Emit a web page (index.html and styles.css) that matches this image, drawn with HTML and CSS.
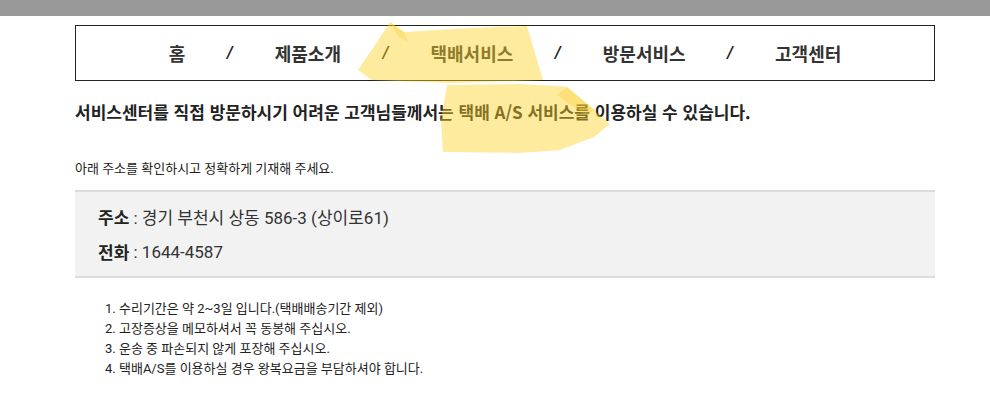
FILE: index.html
```html
<!DOCTYPE html>
<html lang="ko">
<head>
  <meta charset="UTF-8">
  <meta name="viewport" content="width=device-width, initial-scale=1.0">
  <title>택배서비스 - 고객센터</title>
  <link rel="stylesheet" href="styles.css">
</head>
<body>

  <div class="topbar"></div>

  <div class="page">
    <nav class="menu">
      <a href="#">홈</a>
      <span class="sep">/</span>
      <a href="#">제품소개</a>
      <span class="sep">/</span>
      <a href="#">택배서비스</a>
      <span class="sep">/</span>
      <a href="#">방문서비스</a>
      <span class="sep">/</span>
      <a href="#">고객센터</a>
    </nav>

    <h2 class="lead">서비스센터를 직접 방문하시기 어려운 고객님들께서는 택배 A/S 서비스를 이용하실 수 있습니다.</h2>

    <p class="note">아래 주소를 확인하시고 정확하게 기재해 주세요.</p>

    <div class="addrBox">
      <p><strong>주소</strong> : 경기 부천시 상동 586-3 (상이로61)</p>
      <p><strong>전화</strong> : 1644-4587</p>
    </div>

    <ol class="rules">
      <li>수리기간은 약 2~3일 입니다.(택배배송기간 제외)</li>
      <li>고장증상을 메모하셔서 꼭 동봉해 주십시오.</li>
      <li>운송 중 파손되지 않게 포장해 주십시오.</li>
      <li>택배A/S를 이용하실 경우 왕복요금을 부담하셔야 합니다.</li>
    </ol>
  </div>

  <!-- marker highlights drawn over the page -->
  <svg class="marks" width="990" height="417" viewBox="0 0 990 417">
    <polygon points="390,22 404,32 470,28 527,26 543,80 450,83 372,80 358,70 375,45"/>
    <polygon points="390,22 404,32 408,42 398,36" class="fold"/>
    <polygon points="447,85 520,84 557,86 567,87 610,124 594,137 560,150 520,153 443,152 441,120"/>
    <polygon points="557,95 567,87 595,110 585,115" class="fold"/>
  </svg>

</body>
</html>
```

FILE: styles.css
```css
body {
  margin: 0;
  font-family: Roboto, "Noto Sans CJK KR", sans-serif;
  color: #222;
  background: #fff;
}
.topbar {
  height: 16px;
  background-color: #999;
}
.page {
  width: 860px;
  margin-left: 75px;
  padding-top: 9px;
}
.menu {
  display: flex;
  justify-content: center;
  align-items: center;
  gap: 42px;
  height: 54px;
  border: 1px solid #222;
  font-family: "Noto Sans CJK KR", sans-serif;
  font-size: 18px;
  font-weight: 700;
}
.menu a {
  color: #333;
  text-decoration: none;
}
.menu .sep {
  font-family: "DejaVu Sans", sans-serif;
  font-style: italic;
  font-size: 15px;
  color: #222;
}
.lead {
  margin: 19px 0 0;
  font-family: "Noto Sans CJK KR", sans-serif;
  font-size: 17px;
  font-weight: 700;
  line-height: 24px;
  color: #222;
}
.note {
  margin: 36px 0 0;
  font-size: 13px;
  line-height: 18px;
  color: #222;
}
.addrBox {
  margin-top: 12px;
  padding: 7px 23px 7px;
  background: #f2f2f2;
  border-top: 2px solid #dcdcdc;
  border-bottom: 2px solid #dcdcdc;
  font-size: 17px;
  color: #333;
}
.addrBox p {
  display: flex;
  align-items: center;
  white-space: pre;
  height: 35px;
  margin: 0;
}
.addrBox strong {
  font-family: "Noto Sans CJK KR", sans-serif;
  font-weight: 700;
  color: #222;
}
.rules {
  margin: 21px 0 0;
  padding-left: 30px;
  list-style-position: inside;
  font-size: 13px;
  line-height: 20px;
  color: #222;
}
.marks {
  position: absolute;
  top: 0;
  left: 0;
  pointer-events: none;
}
.marks polygon {
  fill: rgba(252, 210, 40, 0.45);
}
.marks polygon.fold {
  fill: rgba(252, 200, 30, 0.3);
}
```
